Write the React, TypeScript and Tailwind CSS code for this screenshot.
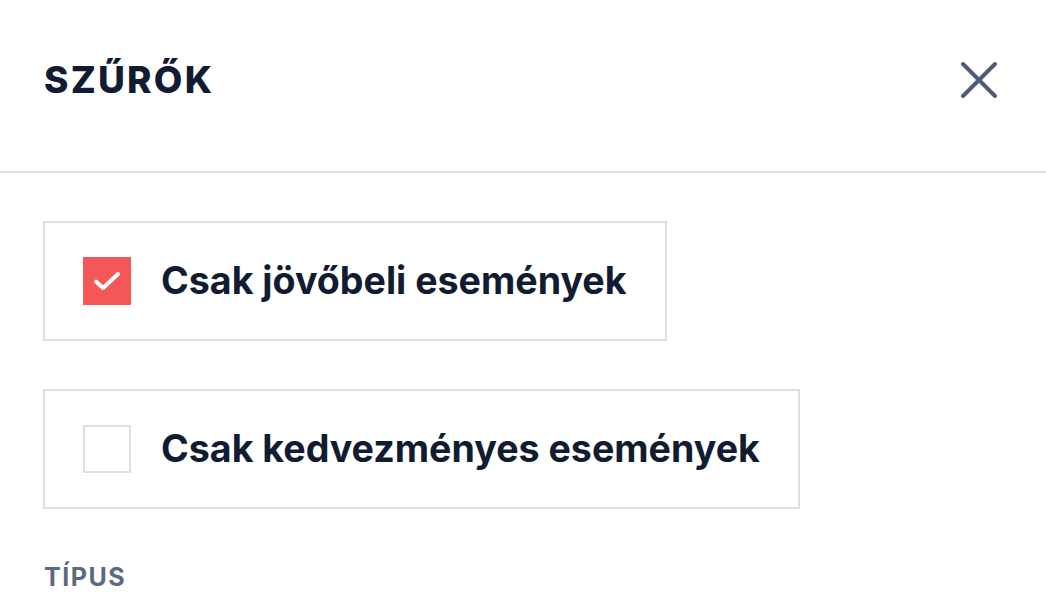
import React, { useState } from 'react';

const FilterOption: React.FC<{ label: string; checked: boolean; onToggle: () => void }> = ({ label, checked, onToggle }) => {
  return (
    <button
      onClick={onToggle}
      className="flex h-[120px] items-center gap-[30px] self-start border-2 border-[#dae2e8] bg-white pl-[38px] pr-[38px]"
    >
      {checked ? (
        <span className="flex h-[48px] w-[48px] items-center justify-center bg-[#f45757]">
          <svg width="28" height="20" viewBox="0 0 28 20" fill="none">
            <path d="M3 10.5 L10 17 L25 3" stroke="white" strokeWidth="4" strokeLinecap="round" strokeLinejoin="round" />
          </svg>
        </span>
      ) : (
        <span className="h-[48px] w-[48px] border-2 border-[#dae2e8] bg-white" />
      )}
      <span className="text-[37.6px] font-bold leading-none text-[#111c33]">{label}</span>
    </button>
  );
};

export default function App() {
  const [future, setFuture] = useState(true);
  const [discount, setDiscount] = useState(false);

  return (
    <div className="min-h-screen w-full bg-white font-['Inter',sans-serif]">
      {/* Header */}
      <div className="flex h-[173px] items-center justify-between border-b-2 border-[#d8e0e6] pl-[44px] pr-[48px]">
        <h1 className="pb-[12px] text-[37px] font-extrabold tracking-[0.06em] text-[#111c33]">SZŰRŐK</h1>
        <button className="pb-[12px]" aria-label="Bezárás">
          <svg width="38" height="38" viewBox="0 0 38 38" fill="none">
            <path d="M3 3 L35 35 M35 3 L3 35" stroke="#4d5c78" strokeWidth="4" strokeLinecap="round" />
          </svg>
        </button>
      </div>

      {/* Filters */}
      <div className="flex flex-col gap-[48px] px-[43px] pt-[48px]">
        <FilterOption label="Csak jövőbeli események" checked={future} onToggle={() => setFuture(!future)} />
        <FilterOption label="Csak kedvezményes események" checked={discount} onToggle={() => setDiscount(!discount)} />
      </div>

      <div className="px-[44px] pt-[50px] text-[25px] font-bold tracking-[0.06em] text-[#5b6a84]">TÍPUS</div>
    </div>
  );
}
